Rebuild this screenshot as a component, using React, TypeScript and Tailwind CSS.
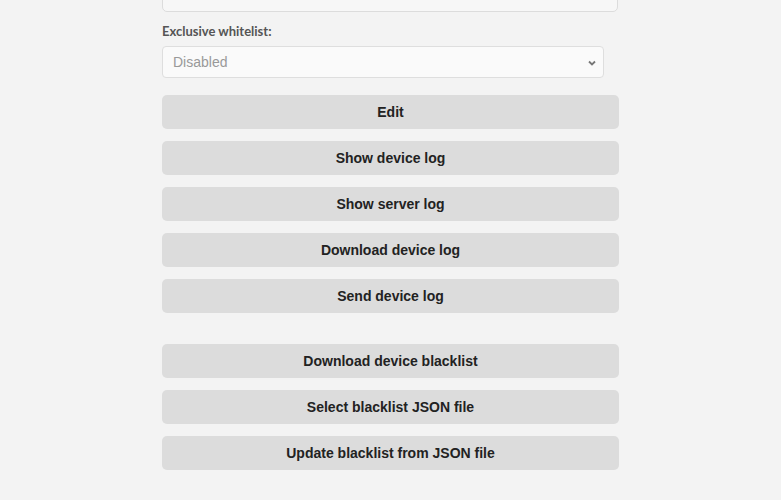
const buttons = ['Edit', 'Show device log', 'Show server log', 'Download device log', 'Send device log']
const blacklist = ['Download device blacklist', 'Select blacklist JSON file', 'Update blacklist from JSON file']

function ActionButton({ label }: { label: string }) {
  return (
    <button
      type="button"
      className="flex h-[34px] w-full items-center justify-center rounded-[5px] bg-[#dcdcdc] pt-[2px] text-[14px] font-bold text-[#222] [font-family:'Liberation_Sans',Arial,sans-serif]"
    >
      {label}
    </button>
  )
}

export default function App() {
  return (
    <div className="h-[500px] w-full overflow-hidden bg-[#f3f3f3]">
      <div className="ml-[162px] w-[457px]">
        <div className="-mt-[20px] h-[32px] w-[456px] rounded-[5px] border border-[#dcdcdc] bg-[#f7f7f7]" />
        <div className="mt-[10px] text-[13px] font-bold text-[#555] [font-family:Lato,sans-serif]">Exclusive whitelist:</div>
        <div className="mt-[4px] flex h-[32px] w-[442px] items-center justify-between rounded-[4px] border border-[#dedede] bg-[#fafafa] pl-[10px] pr-[5px] pt-[2px]">
          <span className="text-[14px] text-[#999] [font-family:'Liberation_Sans',Arial,sans-serif]">Disabled</span>
          <svg width="12" height="12" viewBox="0 0 12 12" fill="none" stroke="#777" strokeWidth="1.8">
            <path d="M3 4.5l3 3 3-3" />
          </svg>
        </div>
        <div className="mt-[17px] flex flex-col gap-[12px]">
          {buttons.map((b) => (
            <ActionButton key={b} label={b} />
          ))}
        </div>
        <div className="mt-[31px] flex flex-col gap-[12px]">
          {blacklist.map((b) => (
            <ActionButton key={b} label={b} />
          ))}
        </div>
      </div>
    </div>
  )
}
